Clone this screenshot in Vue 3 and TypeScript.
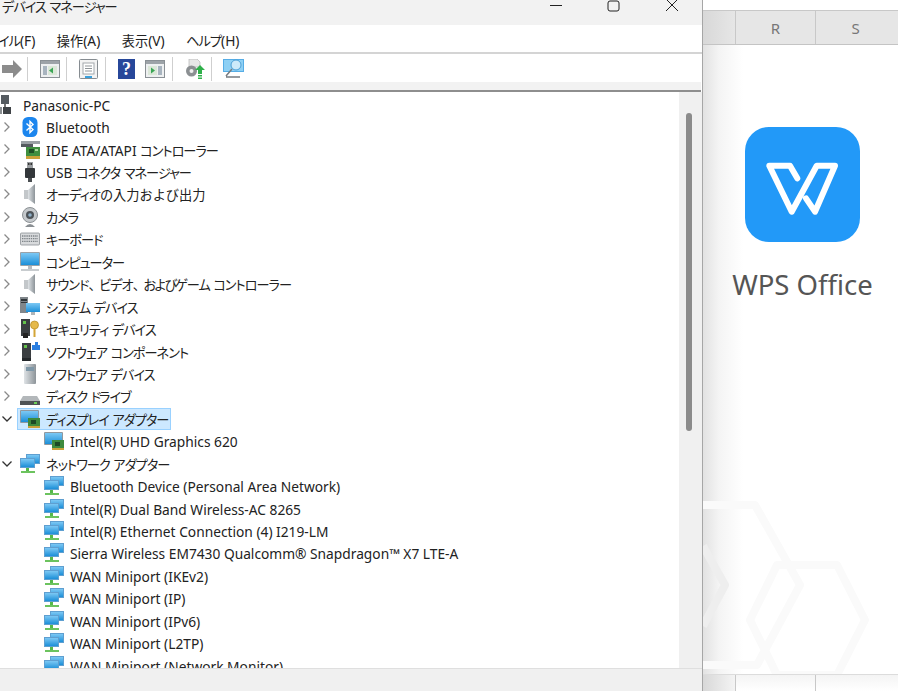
<script setup lang="ts">
type Row = { label: string; icon: string; level: 'root' | 'cat' | 'child'; open?: boolean; selected?: boolean; tight?: boolean }
type Seg = { text: string; kind: string }

const rows: Row[] = [
  { label: 'Panasonic-PC', icon: 'pc', level: 'root' },
  { label: 'Bluetooth', icon: 'bt', level: 'cat' },
  { label: 'IDE ATA/ATAPI コントローラー', icon: 'ide', level: 'cat' },
  { label: 'USB コネクタ マネージャー', icon: 'usb', level: 'cat' },
  { label: 'オーディオの入力および出力', icon: 'speaker', level: 'cat' },
  { label: 'カメラ', icon: 'camera', level: 'cat' },
  { label: 'キーボード', icon: 'keyboard', level: 'cat' },
  { label: 'コンピューター', icon: 'monitor', level: 'cat' },
  { label: 'サウンド、ビデオ、およびゲーム コントローラー', icon: 'speaker', level: 'cat', tight: true },
  { label: 'システム デバイス', icon: 'system', level: 'cat' },
  { label: 'セキュリティ デバイス', icon: 'security', level: 'cat' },
  { label: 'ソフトウェア コンポーネント', icon: 'component', level: 'cat' },
  { label: 'ソフトウェア デバイス', icon: 'softdev', level: 'cat' },
  { label: 'ディスク ドライブ', icon: 'disk', level: 'cat' },
  { label: 'ディスプレイ アダプター', icon: 'display', level: 'cat', open: true, selected: true },
  { label: 'Intel(R) UHD Graphics 620', icon: 'display', level: 'child' },
  { label: 'ネットワーク アダプター', icon: 'network', level: 'cat', open: true },
  { label: 'Bluetooth Device (Personal Area Network)', icon: 'network', level: 'child' },
  { label: 'Intel(R) Dual Band Wireless-AC 8265', icon: 'network', level: 'child' },
  { label: 'Intel(R) Ethernet Connection (4) I219-LM', icon: 'network', level: 'child' },
  { label: 'Sierra Wireless EM7430 Qualcomm® Snapdragon™ X7 LTE-A', icon: 'network', level: 'child' },
  { label: 'WAN Miniport (IKEv2)', icon: 'network', level: 'child' },
  { label: 'WAN Miniport (IP)', icon: 'network', level: 'child' },
  { label: 'WAN Miniport (IPv6)', icon: 'network', level: 'child' },
  { label: 'WAN Miniport (L2TP)', icon: 'network', level: 'child' },
  { label: 'WAN Miniport (Network Monitor)', icon: 'network', level: 'child' },
]
const menus: string[] = ['イル(F)', '操作(A)', '表示(V)', 'ヘルプ(H)']

const narrow = /[ーントドッャュョィェォァ]/
const kana = /[\u30A0-\u30FF]/
const han = /[\u3000-\u303F\u3040-\u309F\u4E00-\u9FFF]/

function segs(text: string): Seg[] {
  const parts = text.match(/[ーントドッャュョィェォァ]+|[\u30A0-\u30FF]+|[\u3000-\u303F\u3040-\u309F\u4E00-\u9FFF]+|[^\u3000-\u30FF\u4E00-\u9FFF]+/g) ?? []
  return parts.map((p) => ({
    text: p,
    kind: narrow.test(p) && kana.test(p) && !/[^ーントドッャュョィェォァ]/.test(p) ? 'narrow' : kana.test(p) ? 'kana' : han.test(p) ? 'han' : 'lat',
  }))
}
</script>

<template>
  <div class="screen">
    <svg class="sprite" width="0" height="0" aria-hidden="true">
      <defs>
        <linearGradient id="blue" x1="0" y1="0" x2="0" y2="1"><stop offset="0" stop-color="#7cc8f4" /><stop offset="1" stop-color="#1c8fd8" /></linearGradient>
        <linearGradient id="metal" x1="0" y1="0" x2="1" y2="0"><stop offset="0" stop-color="#dfe3e6" /><stop offset="1" stop-color="#8d9499" /></linearGradient>
        <symbol id="i-pc" viewBox="0 0 20 20">
          <rect x="6" y="0" width="8" height="9" fill="#555b60" /><rect x="9" y="9" width="2" height="4" fill="#777" />
          <rect x="0" y="12" width="7" height="7" fill="#8b8f92" /><rect x="8" y="12" width="8" height="7" fill="#3f4347" /><rect x="2" y="14" width="3" height="3" fill="#eee" />
        </symbol>
        <symbol id="i-bt" viewBox="0 0 20 20">
          <rect x="2.500" y="0" width="15" height="20" rx="5.500" fill="#1c86ee" />
          <path d="M6.500 6.500 13 12.600 10 15.600V4.400l3 3L6.500 13.500" fill="none" stroke="#fff" stroke-width="1.400" />
        </symbol>
        <symbol id="i-ide" viewBox="0 0 20 20">
          <rect x="1" y="1" width="19" height="3" fill="#9aa0a4" /><rect x="1" y="4" width="12" height="3" fill="#555b5f" />
          <rect x="6" y="7" width="14" height="10" fill="#3f8f3f" /><rect x="9" y="9" width="5" height="4" fill="#1d4f26" /><rect x="6" y="16" width="14" height="3" fill="#c9a23a" /><rect x="15" y="9" width="3" height="2" fill="#a9d89a" />
        </symbol>
        <symbol id="i-usb" viewBox="0 0 20 20">
          <rect x="7" y="0" width="6" height="6" fill="#9a9ea1" /><rect x="8" y="1" width="1.500" height="2" fill="#333" /><rect x="10.500" y="1" width="1.500" height="2" fill="#333" />
          <rect x="5" y="6" width="10" height="10" rx="1" fill="#33373a" /><rect x="8" y="16" width="4" height="4" fill="#4a4e51" />
        </symbol>
        <symbol id="i-speaker" viewBox="0 0 20 20">
          <rect x="4" y="6" width="4" height="9" fill="#c3c7ca" /><path d="M8 6l7-6v20l-7-5z" fill="url(#metal)" />
        </symbol>
        <symbol id="i-camera" viewBox="0 0 20 20">
          <circle cx="10" cy="8" r="7.500" fill="#c4c8cb" stroke="#8b9094" /><circle cx="10" cy="8" r="4" fill="#4d5358" /><circle cx="10" cy="8" r="1.800" fill="#8fb0c8" />
          <path d="M5 20q5-6 10 0z" fill="#8a8f93" />
        </symbol>
        <symbol id="i-keyboard" viewBox="0 0 20 20">
          <rect x=".500" y="4" width="19" height="12" rx="1" fill="#d8dadc" stroke="#8b9094" stroke-width=".800" />
          <path d="M2 7h16M2 9.700h16M2 12.400h16" stroke="#7d8387" stroke-width="1.300" stroke-dasharray="1.400 .800" />
        </symbol>
        <symbol id="i-monitor" viewBox="0 0 20 20">
          <rect x="0" y="0" width="20" height="14" rx="1" fill="#9aa2a8" /><rect x="1" y="1" width="18" height="12" fill="url(#blue)" />
          <rect x="8" y="14" width="4" height="3" fill="#b7bcc0" /><rect x="1" y="17" width="18" height="2" fill="#c8cccf" />
        </symbol>
        <symbol id="i-system" viewBox="0 0 20 20">
          <rect x="0" y="0" width="8" height="16" fill="#80868b" /><rect x="1" y="2" width="6" height="2" fill="#30363a" /><rect x="1" y="5" width="6" height="1" fill="#30363a" />
          <rect x="6" y="6" width="14" height="9" fill="url(#blue)" /><rect x="11" y="15" width="4" height="3" fill="#aeb4b8" />
        </symbol>
        <symbol id="i-security" viewBox="0 0 20 20">
          <rect x="1" y="0" width="9" height="17" fill="#3a3e41" /><rect x="3" y="2" width="3" height="3" fill="#63c24a" /><rect x="3" y="14" width="5" height="5" fill="#222" />
          <circle cx="14.500" cy="6" r="4" fill="#e5b94a" stroke="#b58a22" stroke-width=".700" /><rect x="13.500" y="9" width="2" height="9" fill="#d4a537" />
        </symbol>
        <symbol id="i-component" viewBox="0 0 20 20">
          <rect x="2" y="1" width="9" height="15" fill="#3a3e41" /><rect x="4" y="3" width="3" height="3" fill="#63c24a" /><rect x="2" y="16" width="9" height="3" fill="#23272a" />
          <path d="M12 3h3V0h3v3h2v5h-8z" fill="#2c7fe0" />
        </symbol>
        <symbol id="i-softdev" viewBox="0 0 20 20">
          <rect x="4" y="0" width="12" height="20" rx="1" fill="url(#metal)" /><rect x="6" y="3" width="8" height="4" fill="#7f98a8" />
        </symbol>
        <symbol id="i-disk" viewBox="0 0 20 20">
          <path d="M3 10h14l3 5v3H0v-3z" fill="#b3b7ba" /><rect x="0" y="15" width="20" height="4" fill="#4f5356" /><rect x="14" y="16" width="3" height="2" fill="#6dd05a" />
        </symbol>
        <symbol id="i-display" viewBox="0 0 20 20">
          <rect x="0" y="1" width="19" height="13" rx="1" fill="#8f989f" /><rect x="1" y="2" width="17" height="11" fill="url(#blue)" />
          <rect x="8" y="9" width="12" height="9" fill="#3d8a3d" /><rect x="11" y="11" width="5" height="4" fill="#1c4a25" /><rect x="8" y="17" width="12" height="2" fill="#c9a23a" />
        </symbol>
        <symbol id="i-network" viewBox="0 0 20 20">
          <rect x="6" y="0" width="14" height="10" fill="#5f9fd0" /><rect x="7" y="1" width="12" height="8" fill="url(#blue)" />
          <rect x="0" y="4" width="15" height="10" fill="#5f9fd0" /><rect x="1" y="5" width="13" height="8" fill="url(#blue)" />
          <rect x="6" y="14" width="3" height="3" fill="#55b84a" /><rect x="1" y="17" width="14" height="2" fill="#6cc35e" />
        </symbol>
      </defs>
    </svg>

    <section class="window">
      <header class="titlebar">
        <span class="title"><span v-for="(s, i) in segs('デバイス マネージャー')" :key="i" :class="s.kind">{{ s.text }}</span></span>
        <div class="controls">
          <svg class="ctl" width="14" height="12" viewBox="0 0 14 12"><path d="M1 5.500h12" stroke="#222" fill="none" /></svg>
          <svg class="ctl" width="14" height="12" viewBox="0 0 14 12"><rect x="1" y="1" width="11" height="10" rx="2" stroke="#222" fill="none" /></svg>
          <svg class="ctl" width="14" height="12" viewBox="0 0 14 12"><path d="M1 -1l12 12M13 -1 1 11" stroke="#222" fill="none" /></svg>
        </div>
      </header>

      <nav class="menubar">
        <span v-for="m in menus" :key="m"><span v-for="(s, i) in segs(m)" :key="i" :class="s.kind">{{ s.text }}</span></span>
      </nav>

      <div class="toolbar">
        <div class="tb-group tb-first">
          <svg width="20" height="18" viewBox="0 0 20 18"><path d="M0 5h11V0l9 9-9 9v-5H0z" fill="#8c8c8c" /></svg>
        </div>
        <div class="tb-group tb-one">
          <svg width="20" height="18" viewBox="0 0 20 18"><rect x=".500" y=".500" width="19" height="17" fill="#eef0f1" stroke="#8a9095" /><rect x="1" y="1" width="18" height="3" fill="#9da3a8" /><rect x="3" y="6" width="4" height="9" fill="#a8b4bf" /><rect x="8" y="6" width="9" height="9" fill="#dbe7d8" /><path d="M13 7.500v6l-4-3z" fill="#3aa655" /></svg>
        </div>
        <div class="tb-group tb-one">
          <svg width="19" height="20" viewBox="0 0 19 20"><rect x=".500" y=".500" width="18" height="19" rx="1" fill="#f3f3f3" stroke="#868c91" /><rect x="4" y="4" width="11" height="11" fill="#fff" stroke="#a3a8ac" /><path d="M6 7h7M6 9.500h7M6 12h7" stroke="#8f9498" /><rect x="6" y="17" width="7" height="2" fill="#39a0dc" /></svg>
        </div>
        <div class="tb-group tb-two">
          <svg width="17" height="20" viewBox="0 0 17 20"><rect width="17" height="20" fill="#27479a" /><text x="8.500" y="16" text-anchor="middle" class="help-mark">?</text></svg>
          <svg width="20" height="18" viewBox="0 0 20 18"><rect x=".500" y=".500" width="19" height="17" fill="#eef0f1" stroke="#8a9095" /><rect x="1" y="1" width="18" height="3" fill="#9da3a8" /><rect x="13" y="6" width="4" height="9" fill="#a8b4bf" /><rect x="3" y="6" width="9" height="9" fill="#dbe7d8" /><path d="M6 7.500v6l4-3z" fill="#3aa655" /></svg>
        </div>
        <div class="tb-group tb-one">
          <svg width="21" height="20" viewBox="0 0 21 20"><path d="M5 0h8l3 3v5H5z" fill="#e7e7e7" stroke="#b5b5b5" stroke-width=".700" /><circle cx="7.500" cy="12" r="5.500" fill="#8b8f92" /><circle cx="7.500" cy="12" r="2" fill="#eee" /><path d="M16 6l5 5h-3v4h-4v-4h-3z" fill="#2fb04a" /><path d="M14 16h4v1.500h-4zM14 18.500h4V20h-4z" fill="#2fb04a" /></svg>
        </div>
        <div class="tb-group tb-one">
          <svg width="21" height="20" viewBox="0 0 21 20"><rect x="0" y="0" width="21" height="13" fill="#56ade6" /><rect x="1" y="1" width="19" height="11" fill="#8ed0f4" /><circle cx="13" cy="6" r="5" fill="#cdeafa" stroke="#4b9fd6" /><path d="M9 10 3 17M3 18h14" stroke="#767b80" stroke-width="1.500" fill="none" /></svg>
        </div>
      </div>
      <div class="tool-strip"></div>

      <div class="body">
        <div class="tree">
          <div v-for="r in rows" :key="r.label" class="row" :class="[r.level, { tight: r.tight }]">
            <svg v-if="r.level === 'cat'" class="chev" width="10" height="10" viewBox="0 0 10 10">
              <path v-if="!r.open" d="M2.500 .500l4.500 4.500-4.500 4.500" fill="none" stroke="#8a8a8a" stroke-width="1.300" />
              <path v-else d="M.500 2.500l4.500 4.500 4.500-4.500" fill="none" stroke="#333" stroke-width="1.300" />
            </svg>
            <span class="item" :class="{ selected: r.selected }">
              <svg class="icon" width="20" height="20"><use :href="'#i-' + r.icon" /></svg>
              <span class="label"><span v-for="(s, i) in segs(r.label)" :key="i" :class="s.kind">{{ s.text }}</span></span>
            </span>
          </div>
        </div>
        <div class="scrollbar"><div class="thumb"></div></div>
      </div>

      <footer class="status"></footer>
    </section>

    <aside class="sheet">
      <div class="sheet-top"></div>
      <div class="cols">
        <span class="col col-blank"></span><span class="col">R</span><span class="col">S</span>
      </div>
      <div class="splash">
        <svg class="hexes" width="195" height="631" viewBox="0 0 195 631">
          <g fill="none" stroke="#fafafa" stroke-width="8" stroke-linejoin="round">
            <path d="M-10 459H52L97 539 54 619H-10" />
            <path d="M74 519H134L162 574 134 629H74L47 574Z" />
            <path d="M0 500 22 539 0 580" stroke="#eeeeee" />
          </g>
        </svg>
        <svg class="logo" width="115" height="115" viewBox="0 0 115 115">
          <rect width="115" height="115" rx="24" fill="#2299f8" />
          <path d="M52.300 51.300 45 38.700H24.300L46.700 84.700 71.700 38.700H90L70 84.700 61 71.300" fill="none" stroke="#fff" stroke-width="6" stroke-linejoin="round" stroke-linecap="round" />
        </svg>
        <div class="brand">WPS Office</div>
      </div>
      <div class="sheet-foot"><span class="foot-cell first"></span><span class="foot-cell"></span><span class="foot-cell"></span></div>
    </aside>
  </div>
</template>

<style>
html, body { margin: 0; background: #fff; overflow: hidden; }
</style>

<style scoped>
.screen {
  width: 898px; height: 691px; display: flex; overflow: hidden; position: relative;
  font-family: "Noto Sans", "Noto Sans CJK JP", sans-serif; color: #222;
}
.sprite { position: absolute; }
.kana { font-size: 13.200px; letter-spacing: -1px; font-feature-settings: "palt"; }
.narrow { font-size: 13.200px; letter-spacing: -2.300px; font-feature-settings: "palt"; }
.han { font-size: 13.200px; }
.tight .han { letter-spacing: -2.600px; }
.lat { font-size: 13.750px; }
.window { width: 702px; flex: none; display: flex; flex-direction: column; border-right: 1px solid #a6a6a6; box-sizing: content-box; }
.titlebar { height: 25px; flex: none; background: #f2f2f2; display: flex; overflow: hidden; position: relative; }
.title { line-height: 14px; margin: -1px 0 0 2px; white-space: nowrap; }
.controls { margin-left: auto; display: flex; align-items: flex-start; padding-right: 23px; gap: 44px; }
.ctl { display: block; }
.menubar { height: 29px; flex: none; background: #fff; border-bottom: 2px solid #d4d4d4; display: flex; gap: 21.500px; align-items: center; padding-top: 2px; box-sizing: border-box; margin-left: -2px; }
.toolbar { height: 28px; flex: none; background: #fff; display: flex; align-items: center; padding-top: 2px; box-sizing: border-box; }
.tb-group { height: 24px; display: flex; align-items: center; justify-content: center; border-left: 1px solid #cfcfcf; box-sizing: border-box; padding-left: 5px; }
.tb-first { width: 27px; border-left: 0; justify-content: flex-start; padding-left: 2px; }
.tb-one { width: 39px; }
.tb-two { width: 67px; gap: 10px; }
.help-mark { fill: #fff; font: bold 18px "Liberation Serif", serif; }
.tool-strip { flex: none; background: #f2f2f2; border-bottom: 2px solid #8e8e8e; box-sizing: content-box; margin-right: 1px; height: 8px; }
.body { flex: 1; min-height: 0; display: flex; background: #fff; }
.tree { flex: 1; min-width: 0; overflow: hidden; padding-top: 1.500px; }
.row { height: 22.440px; display: flex; align-items: center; white-space: nowrap; position: relative; }
.cat { padding-left: 20px; }
.child { padding-left: 44px; }
.root { margin-left: -5px; }
.chev { position: absolute; left: 2px; top: 6px; }
.item { display: inline-flex; align-items: center; gap: 6px; height: 22px; }
.root .item { gap: 8px; }
.selected { background: #cce8ff; outline: 1px solid #99d1ff; outline-offset: -1px; margin-left: -3px; padding: 0 3px 0 3px; }
.scrollbar { width: 23px; flex: none; background: #f0f0f0; position: relative; }
.thumb { position: absolute; left: 7px; top: 21px; width: 6px; height: 318px; background: #8b8b8b; border-radius: 3px; }
.status { height: 23px; flex: none; background: #f0f0f0; border-top: 1px solid #dfdfdf; box-sizing: border-box; }
.sheet { flex: 1; min-width: 0; display: flex; flex-direction: column; background: #fff; position: relative; }
.sheet-top { height: 10px; flex: none; background: #fff; border-bottom: 1px solid #c8c8c8; box-sizing: content-box; }
.cols { height: 33px; flex: none; background: #e6e6e6; border-bottom: 1px solid #c4c4c4; display: flex; }
.col { width: 80px; flex: none; text-align: center; color: #777; font-size: 15px; line-height: 34px; border-left: 1px solid #c8c8c8; box-sizing: border-box; }
.col-blank { width: 32px; border-left: 0; background: linear-gradient(90deg, #d8d8d8, #e6e6e6); }
.splash { flex: 1; min-height: 0; position: relative; display: flex; flex-direction: column; align-items: center; padding-top: 82px; background: linear-gradient(90deg, #e2e2e2 0, #f4f4f4 16px, #fff 40px); overflow: hidden; }
.hexes { position: absolute; left: 0; top: 1px; }
.logo { position: relative; margin-left: 3px; display: block; }
.brand { position: relative; margin: 20px 0 0 4px; font-size: 27.500px; line-height: 46px; color: #555; white-space: nowrap; }
.sheet-foot { height: 16px; flex: none; background: linear-gradient(180deg, #f4f4f4, #fff); border-top: 1px solid #dcdcdc; display: flex; }
.foot-cell { width: 80px; flex: none; border-left: 1px solid #c8c8c8; box-sizing: border-box; }
.foot-cell.first { width: 32px; border-left: 0; background: linear-gradient(90deg, #d8d8d8, #f4f4f4); }
</style>
